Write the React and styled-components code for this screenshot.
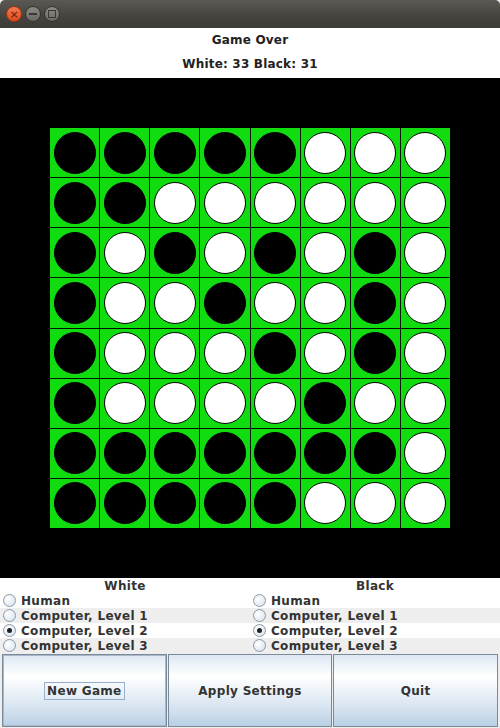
import React from 'react';
import styled, { createGlobalStyle, css } from 'styled-components';

const GlobalStyle = createGlobalStyle`
  html, body {
    margin: 0;
    padding: 0;
    background: #eeeeee;
  }
  body {
    font-family: "DejaVu Sans", "Noto Sans", sans-serif;
  }
`;

const BOARD = [
  'BBBBBWWW',
  'BBWWWWWW',
  'BWBWBWBW',
  'BWWBWWBW',
  'BWWWBWBW',
  'BWWWWBWW',
  'BBBBBBBW',
  'BBBBBWWW',
];

const Window = styled.div`
  width: 500px;
  height: 728px;
  display: flex;
  flex-direction: column;
  overflow: hidden;
`;

const TitleBar = styled.div`
  height: 28px;
  flex: none;
  display: flex;
  align-items: center;
  gap: 3px;
  padding-left: 6px;
  background: linear-gradient(#5b5953, #45433e 60%, #3c3b37);
  border-radius: 5px 5px 0 0;
`;

const WinButton = styled.div`
  width: 16px;
  height: 16px;
  border-radius: 50%;
  display: flex;
  align-items: center;
  justify-content: center;
  box-sizing: border-box;
  border: 1px solid #34332f;
  background: linear-gradient(#8c8a84, #6a6863);
  color: #3a3935;
  font-size: 11px;
  line-height: 1;
  ${p => p.$close && css`
    background: linear-gradient(#f47a4d, #e0481e);
    border-color: #9c3616;
    color: #5a1d08;
  `}
`;

const Dash = styled.div`
  width: 8px;
  height: 2px;
  background: #3a3935;
`;

const Square = styled.div`
  width: 6px;
  height: 6px;
  border: 1.5px solid #3a3935;
`;

const Header = styled.div`
  height: 50px;
  flex: none;
  background: #ffffff;
  display: flex;
  flex-direction: column;
  align-items: center;
  justify-content: space-around;
  padding: 0 0 2px;
  box-sizing: border-box;
  font-size: 12px;
  font-weight: bold;
  letter-spacing: 0.2px;
  color: #222222;
`;

const BoardArea = styled.div`
  height: 500px;
  flex: none;
  background: #000000;
  display: flex;
  align-items: center;
  justify-content: center;
`;

const Grid = styled.div`
  width: 400px;
  height: 400px;
  display: grid;
  grid-template-columns: repeat(8, 1fr);
  grid-template-rows: repeat(8, 1fr);
  gap: 1px;
  background: #061006;
`;

const Cell = styled.div`
  background: #10dc10;
  display: flex;
  align-items: center;
  justify-content: center;
`;

const Disc = styled.div`
  width: 42px;
  height: 42px;
  border-radius: 50%;
  box-sizing: border-box;
  background: ${p => (p.$white ? '#ffffff' : '#000000')};
  border: 1px solid #000000;
`;

const Settings = styled.div`
  display: grid;
  grid-template-columns: 1fr 1fr;
  background: #ffffff;
  flex: none;
`;

const PlayerColumn = styled.div`
  display: flex;
  flex-direction: column;
`;

const ColumnTitle = styled.div`
  height: 15px;
  text-align: center;
  font-size: 12px;
  font-weight: bold;
  letter-spacing: 0.3px;
  color: #333333;
  line-height: 16px;
`;

const RadioRow = styled.div`
  height: 15px;
  display: flex;
  align-items: center;
  gap: 5px;
  padding-left: 3px;
  font-size: 12px;
  font-weight: bold;
  letter-spacing: 0.3px;
  color: #333333;
  background: ${p => (p.$shaded ? '#eeeeee' : '#ffffff')};
`;

const RadioMark = styled.span`
  width: 13px;
  height: 13px;
  flex: none;
  box-sizing: border-box;
  border-radius: 50%;
  border: 1px solid #8a99a8;
  background: radial-gradient(circle at 35% 35%, #ffffff, #dde6ee 80%);
  display: flex;
  align-items: center;
  justify-content: center;
  &::after {
    content: '';
    display: ${p => (p.$checked ? 'block' : 'none')};
    width: 5px;
    height: 5px;
    border-radius: 50%;
    background: #222222;
  }
`;

const ButtonBar = styled.div`
  flex: 1;
  display: grid;
  grid-template-columns: 1fr 1fr 1fr;
  gap: 1px;
  padding: 1px 2px 1px 2px;
  background: #eeeeee;
`;

const Button = styled.div`
  box-sizing: border-box;
  border: 1px solid #7a8a99;
  background: linear-gradient(#dde8f3, #ffffff 30%, #d6e3f0 75%, #b8cfe5);
  display: flex;
  align-items: center;
  justify-content: center;
  font-size: 12px;
  font-weight: bold;
  letter-spacing: 0.3px;
  color: #333333;
  ${p => p.$focused && css`
    box-shadow: inset 0 0 0 1px #a8b8c8;
  `}
`;

const FocusRing = styled.span`
  border: 1px solid #99aecb;
  padding: 1px 2px;
`;

const LEVELS = ['Human', 'Computer, Level 1', 'Computer, Level 2', 'Computer, Level 3'];

const Player = ({ title }) => (
  <PlayerColumn>
    <ColumnTitle>{title}</ColumnTitle>
    {LEVELS.map((l, i) => (
      <RadioRow key={l} $shaded={i % 2 === 1}>
        <RadioMark $checked={i === 2} />
        {l}
      </RadioRow>
    ))}
  </PlayerColumn>
);

export default function App() {
  return (
    <Window>
      <GlobalStyle />
      <TitleBar>
        <WinButton $close>×</WinButton>
        <WinButton><Dash /></WinButton>
        <WinButton><Square /></WinButton>
      </TitleBar>
      <Header>
        <div>Game Over</div>
        <div>White: 33 Black: 31</div>
      </Header>
      <BoardArea>
        <Grid>
          {BOARD.map((row, r) =>
            row.split('').map((c, col) => (
              <Cell key={`${r}-${col}`}>
                <Disc $white={c === 'W'} />
              </Cell>
            ))
          )}
        </Grid>
      </BoardArea>
      <Settings>
        <Player title="White" />
        <Player title="Black" />
      </Settings>
      <ButtonBar>
        <Button $focused><FocusRing>New Game</FocusRing></Button>
        <Button>Apply Settings</Button>
        <Button>Quit</Button>
      </ButtonBar>
    </Window>
  );
}
